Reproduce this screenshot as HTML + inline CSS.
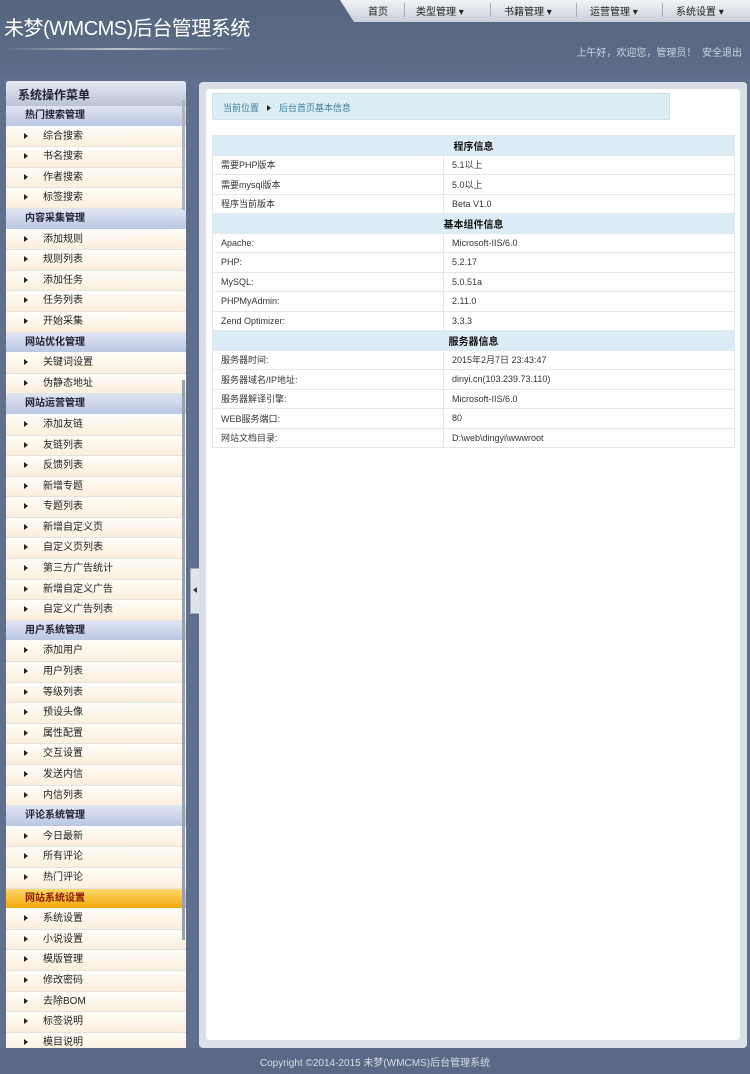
<!DOCTYPE html>
<html><head><meta charset="utf-8"><style>
*{margin:0;padding:0;box-sizing:border-box}
body{width:750px;height:1074px;overflow:hidden;background:#5f6f8c;font-family:"Liberation Sans","Noto Sans CJK SC",sans-serif;position:relative}
#hd{position:absolute;left:0;top:0;width:750px;height:75px;background:linear-gradient(#56657f,#5d6c88)}
#title{position:absolute;left:4px;top:12px;color:#fff;font-size:20px;letter-spacing:-0.5px}
#hr{position:absolute;left:0;top:48px;width:240px;height:2px;background:linear-gradient(90deg,rgba(255,255,255,0),rgba(255,255,255,.6),rgba(255,255,255,0))}
#nav{position:absolute;left:340px;top:0;width:410px;height:22px;background:linear-gradient(#f1f3f6,#c9ced8);clip-path:polygon(0 0,100% 0,100% 100%,14px 100%)}
#nav span{position:absolute;top:3px;font-size:10px;color:#222}
#nav i{position:absolute;top:3px;width:1px;height:14px;background:#aab}
#wel{position:absolute;right:8px;top:44px;font-size:10px;color:#cdd5e3}
#side{position:absolute;left:6px;top:81px;width:180px;height:967px;background:#fff;overflow:hidden;border-radius:3px 3px 0 0}
#side .t{height:25px;background:linear-gradient(#e6eaf3,#b9c2d6);font-size:12px;font-weight:bold;color:#223;padding:5px 0 0 12px}
#side .s{height:20.6px;line-height:19px;background:linear-gradient(#dfe5f3,#bac6e2);font-size:10px;font-weight:bold;color:#223;padding:0 0 0 19px;border-bottom:1px solid #fff}
#side .s.o{background:linear-gradient(#ffd86a,#f2a810);color:#8a1a00}
#side .i{height:20.6px;line-height:19px;background:linear-gradient(#fffdf8,#fbefdc);font-size:10px;color:#222;padding:0 0 0 37px;border-bottom:1px solid #e2e2e2;position:relative}
#side .i:before{content:"";position:absolute;left:18px;top:6px;border-left:4px solid #222;border-top:3px solid transparent;border-bottom:3px solid transparent}
#sb{position:absolute;left:182px;top:380px;width:3px;height:560px;background:#9aa0aa}
#sb2{position:absolute;left:182px;top:100px;width:3px;height:110px;background:#b0b5bd}
#tog{position:absolute;left:190px;top:568px;width:10px;height:46px;background:#dfe4ec;border:1px solid #aab}
#tog:after{content:"";position:absolute;left:2px;top:18px;border-right:4px solid #333;border-top:3px solid transparent;border-bottom:3px solid transparent}
#main{position:absolute;left:199px;top:82px;width:548px;height:966px;background:#dbe0e8;border-radius:4px}
#inner{position:absolute;left:7px;top:7px;width:534px;height:951px;background:#fff;border-radius:4px}
#bc{position:absolute;left:212px;top:93px;width:458px;height:27px;background:#dcedf4;border:1px solid #cbe0ea;border-radius:2px;font-size:9px;color:#3a7ea0;padding:7px 0 0 10px}
#bc b{display:inline-block;border-left:4px solid #222;border-top:3px solid transparent;border-bottom:3px solid transparent;margin:0 8px 0 8px}
table{position:absolute;left:212px;top:135px;width:523px;border-collapse:collapse;font-size:9px;color:#333}
td{height:19.5px;border:1px solid #e3e6ea;padding:0 0 0 8px}
td.h{background:#dcecf7;text-align:center;font-weight:bold;font-size:10px;color:#111;padding:0}
#ft{position:absolute;left:0;top:1048px;width:750px;height:26px;background:#5a6a86;color:#d8dde8;font-size:10px;text-align:center;padding-top:6px}
</style></head><body>
<div id="hd"><div id="title">未梦(WMCMS)后台管理系统</div><div id="hr"></div>
<div id="nav"><span style="left:28px">首页</span><i style="left:64px"></i><span style="left:76px">类型管理 ▾</span><i style="left:150px"></i><span style="left:164px">书籍管理 ▾</span><i style="left:236px"></i><span style="left:250px">运营管理 ▾</span><i style="left:322px"></i><span style="left:336px">系统设置 ▾</span></div>
<div id="wel">上午好，欢迎您，管理员！&nbsp;&nbsp;安全退出</div></div>
<div id="side"><div class="t">系统操作菜单</div>
<div class="s">热门搜索管理</div><div class="i">综合搜索</div><div class="i">书名搜索</div><div class="i">作者搜索</div><div class="i">标签搜索</div>
<div class="s">内容采集管理</div><div class="i">添加规则</div><div class="i">规则列表</div><div class="i">添加任务</div><div class="i">任务列表</div><div class="i">开始采集</div>
<div class="s">网站优化管理</div><div class="i">关键词设置</div><div class="i">伪静态地址</div>
<div class="s">网站运营管理</div><div class="i">添加友链</div><div class="i">友链列表</div><div class="i">反馈列表</div><div class="i">新增专题</div><div class="i">专题列表</div><div class="i">新增自定义页</div><div class="i">自定义页列表</div><div class="i">第三方广告统计</div><div class="i">新增自定义广告</div><div class="i">自定义广告列表</div>
<div class="s">用户系统管理</div><div class="i">添加用户</div><div class="i">用户列表</div><div class="i">等级列表</div><div class="i">预设头像</div><div class="i">属性配置</div><div class="i">交互设置</div><div class="i">发送内信</div><div class="i">内信列表</div>
<div class="s">评论系统管理</div><div class="i">今日最新</div><div class="i">所有评论</div><div class="i">热门评论</div>
<div class="s o">网站系统设置</div><div class="i">系统设置</div><div class="i">小说设置</div><div class="i">模版管理</div><div class="i">修改密码</div><div class="i">去除BOM</div><div class="i">标签说明</div><div class="i">模目说明</div>
</div>
<div id="sb2"></div><div id="sb"></div>
<div id="tog"></div>
<div id="main"><div id="inner"></div></div>
<div id="bc">当前位置<b></b>后台首页基本信息</div>
<table>
<tr><td class="h" colspan="2">程序信息</td></tr>
<tr><td style="width:231px">需要PHP版本</td><td>5.1以上</td></tr>
<tr><td>需要mysql版本</td><td>5.0以上</td></tr>
<tr><td>程序当前版本</td><td>Beta V1.0</td></tr>
<tr><td class="h" colspan="2">基本组件信息</td></tr>
<tr><td>Apache:</td><td>Microsoft-IIS/6.0</td></tr>
<tr><td>PHP:</td><td>5.2.17</td></tr>
<tr><td>MySQL:</td><td>5.0.51a</td></tr>
<tr><td>PHPMyAdmin:</td><td>2.11.0</td></tr>
<tr><td>Zend Optimizer:</td><td>3.3.3</td></tr>
<tr><td class="h" colspan="2">服务器信息</td></tr>
<tr><td>服务器时间:</td><td>2015年2月7日 23:43:47</td></tr>
<tr><td>服务器域名/IP地址:</td><td>dinyi.cn(103.239.73.110)</td></tr>
<tr><td>服务器解译引擎:</td><td>Microsoft-IIS/6.0</td></tr>
<tr><td>WEB服务端口:</td><td>80</td></tr>
<tr><td>网站文档目录:</td><td>D:\web\dingyi\wwwroot</td></tr>
</table>
<div id="ft">Copyright ©2014-2015 未梦(WMCMS)后台管理系统</div>
</body></html>
